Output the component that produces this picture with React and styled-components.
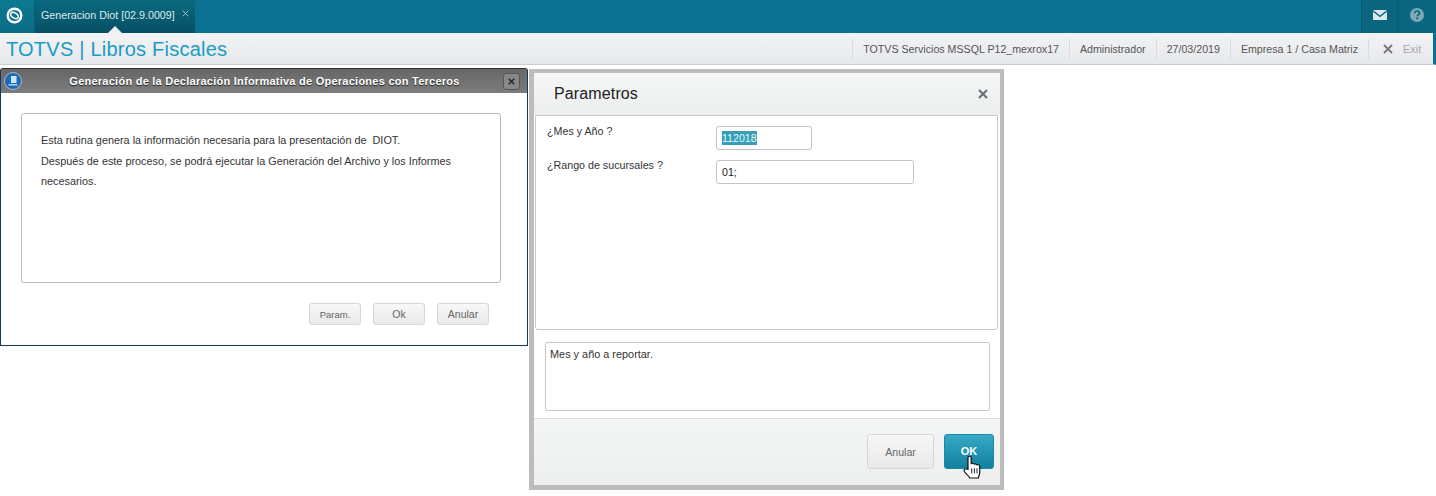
import React from 'react';
import styled, { createGlobalStyle } from 'styled-components';

const GlobalStyle = createGlobalStyle`
  html, body {
    margin: 0;
    padding: 0;
    background: #fff;
    overflow: hidden;
  }
  * { box-sizing: border-box; }
  body { font-family: "Liberation Sans", Arial, sans-serif; }
`;

const Page = styled.div`
  width: 1436px;
  height: 496px;
  display: flex;
  flex-direction: column;
  position: relative;
  overflow: hidden;
`;

const TopBar = styled.div`
  height: 33px;
  display: flex;
  background: #0a7290;
`;

const LogoCell = styled.div`
  width: 35px;
  display: flex;
  align-items: center;
  justify-content: center;
  padding: 0 5px 3px 0;
  background: linear-gradient(#0a7a92, #0b6c84);
  border-right: 1px solid #0a5f78;
`;

const Tab = styled.div`
  width: 160px;
  display: flex;
  align-items: center;
  gap: 7px;
  padding: 0 0 3px 6px;
  position: relative;
  color: #dcebef;
  font-size: 10.7px;
  background: linear-gradient(#0a6a80, #074f64);
  &::after {
    content: '';
    position: absolute;
    left: 73px;
    bottom: 0;
    border: 7px solid transparent;
    border-top: 0;
    border-bottom-color: #eef0f2;
  }
`;

const TabClose = styled.span`
  display: flex;
  margin-top: -3px;
`;

const Spacer = styled.div`
  flex: 1;
`;

const TopIcon = styled.div`
  width: ${(p) => p.$w}px;
  display: flex;
  align-items: center;
  justify-content: center;
  padding-bottom: 3px;
  background: #0a667f;
  border-left: 1px solid #085a72;
`;

const SubBar = styled.div`
  height: 32px;
  display: flex;
  align-items: center;
  background: linear-gradient(#f1f3f5, #e6e8eb);
  border-bottom: 1px solid #c9cbcd;
  border-right: 3px solid #0a7290;
`;

const AppTitle = styled.div`
  flex: 1;
  padding: 2px 0 0 6px;
  font-size: 20px;
  letter-spacing: 0.23px;
  color: #1b9cc3;
`;

const InfoCell = styled.div`
  height: 20px;
  display: flex;
  align-items: center;
  padding: 0 10px;
  font-size: 10.65px;
  color: #555;
  border-left: 1px solid #d9dbdd;
`;

const ExitCell = styled(InfoCell)`
  width: 65px;
  gap: 10px;
  padding: 0 0 0 14px;
  font-size: 10.9px;
  color: #aaa;
`;

const LegacyWindow = styled.section`
  position: absolute;
  left: 0;
  top: 68px;
  width: 528px;
  height: 278px;
  display: flex;
  flex-direction: column;
  background: #fff;
  border: 1px solid #0c3c66;
  border-top-color: #333;
  border-radius: 3px 3px 0 0;
`;

const LegacyTitle = styled.header`
  height: 24px;
  display: flex;
  align-items: center;
  position: relative;
  padding: 0 7px 0 3px;
  background: linear-gradient(#666, #7d7d7d);
`;

const TitleText = styled.h1`
  flex: 1;
  margin: 0;
  padding-left: 4px;
  text-align: center;
  font-size: 11px;
  font-weight: bold;
  letter-spacing: 0.25px;
  color: #fff;
  text-shadow: 0 1px 1px #222;
`;

const LegacyClose = styled.div`
  width: 17px;
  height: 17px;
  display: flex;
  align-items: center;
  justify-content: center;
  background: #888;
  border: 1px solid #555;
  border-radius: 3px;
`;

const LegacyBody = styled.div`
  flex: 1;
  display: flex;
  flex-direction: column;
  padding: 20px 26px 20px 20px;
`;

const MessageBox = styled.div`
  height: 170px;
  padding: 16px 19px;
  font-size: 10.85px;
  line-height: 20.5px;
  color: #333;
  border: 1px solid #bbb;
  border-radius: 3px;
`;

const LegacyButtons = styled.div`
  display: flex;
  justify-content: flex-end;
  gap: 12px;
  margin-top: 20px;
  padding-right: 12px;
`;

const SmallButton = styled.button`
  width: 52px;
  height: 22px;
  padding: 0;
  font-family: inherit;
  font-size: ${(p) => p.$size || 10}px;
  color: #666;
  background: linear-gradient(#f7f7f7, #e9e9e9);
  border: 1px solid #d6d6d6;
  border-radius: 3px;
`;

const ParamWindow = styled.section`
  position: absolute;
  left: 529px;
  top: 69px;
  width: 475px;
  height: 421px;
  display: flex;
  flex-direction: column;
  background: #fff;
  border: solid #bcbcbc;
  border-width: 4px 4px 5px 5px;
`;

const ParamHeader = styled.header`
  height: 42px;
  display: flex;
  align-items: center;
  justify-content: space-between;
  padding: 0 12px 0 20px;
  background: linear-gradient(#f5f6f6, #eceded);
  font-size: 16px;
  letter-spacing: 0.13px;
  color: #222;
`;

const ParamBody = styled.div`
  height: 216px;
  margin-right: 2px;
  margin-left: 1px;
  display: grid;
  grid-template-columns: 169px 1fr;
  grid-auto-rows: 24px;
  row-gap: 10px;
  align-content: start;
  padding: 10px 0 0 11px;
  background: #fff;
  border: 1px solid #c8c8c8;
  border-radius: 0 0 3px 3px;
`;

const FieldLabel = styled.label`
  font-size: 10.7px;
  line-height: 11px;
  color: #333;
`;

const Field = styled.div`
  width: ${(p) => p.$w}px;
  height: 24px;
  display: flex;
  align-items: center;
  padding-left: 5px;
  font-size: 10.6px;
  color: #222;
  background: #fff;
  border: 1px solid #c4c4c4;
  border-radius: 3px;
`;

const Selected = styled.span`
  padding: 1px 0;
  color: #dff;
  background: #3a9db5;
`;

const HelpArea = styled.div`
  flex: 1;
  padding: 12px 10px 7px 11px;
`;

const HelpBox = styled.div`
  height: 69px;
  padding: 5px 4px;
  font-size: 10.9px;
  color: #333;
  border: 1px solid #c8c8c8;
  border-radius: 2px;
`;

const ParamFooter = styled.footer`
  height: 67px;
  display: flex;
  justify-content: flex-end;
  gap: 10px;
  padding: 15px 6px 0 0;
  background: linear-gradient(#f4f5f5, #edeeef);
  border-top: 1px solid #dcdcdc;
`;

const CancelButton = styled.button`
  width: 67px;
  height: 35px;
  padding: 0;
  font-family: inherit;
  font-size: 10.6px;
  color: #666;
  background: linear-gradient(#f7f7f7, #e9e9e9);
  border: 1px solid #d6d6d6;
  border-radius: 3px;
`;

const OkButton = styled.button`
  width: 50px;
  height: 35px;
  padding: 0 0 2px;
  font-family: inherit;
  font-size: 11px;
  font-weight: bold;
  color: #fff;
  background: linear-gradient(#36aac8, #12809f);
  border: 1px solid #1a8aa8;
  border-radius: 3px;
`;

const Cursor = styled.svg`
  position: absolute;
  left: 963px;
  top: 455px;
`;

const CloseGlyph = ({ size, color, width }) => (
  <svg width={size} height={size} viewBox="0 0 10 10">
    <path d="M1 1L9 9M9 1L1 9" stroke={color} strokeWidth={width} fill="none" />
  </svg>
);

const App = () => (
  <Page>
    <GlobalStyle />
    <TopBar>
      <LogoCell>
        <svg width="17" height="17" viewBox="0 0 17 17">
          <circle cx="8.5" cy="8.5" r="6.8" fill="none" stroke="#fff" strokeWidth="2.4" />
          <ellipse cx="8.5" cy="8.5" rx="4.2" ry="2.5" transform="rotate(32 8.5 8.5)" fill="none" stroke="#fff" strokeWidth="1.5" />
        </svg>
      </LogoCell>
      <Tab>
        Generacion Diot [02.9.0009]
        <TabClose>
          <CloseGlyph size={7} color="#a9ccd6" width={1.3} />
        </TabClose>
      </Tab>
      <Spacer />
      <TopIcon $w={36}>
        <svg width="14" height="10" viewBox="0 0 14 10">
          <path d="M0 0H14L7 5.5Z" fill="#dbe9ee" />
          <path d="M0 1.8L7 7.2L14 1.8V10H0Z" fill="#dbe9ee" />
        </svg>
      </TopIcon>
      <TopIcon $w={39}>
        <svg width="14" height="14" viewBox="0 0 14 14">
          <circle cx="7" cy="7" r="7" fill="#7fa9b8" />
          <path d="M4.7 5.2C4.8 3.7 5.8 3 7.1 3C8.5 3 9.5 3.8 9.5 5C9.5 6.5 7.4 6.6 7.3 8.3" fill="none" stroke="#0a667f" strokeWidth="1.7" />
          <rect x="6.3" y="9.4" width="2" height="1.9" fill="#0a667f" />
        </svg>
      </TopIcon>
    </TopBar>
    <SubBar>
      <AppTitle>TOTVS | Libros Fiscales</AppTitle>
      <InfoCell>TOTVS Servicios MSSQL P12_mexrox17</InfoCell>
      <InfoCell>Administrador</InfoCell>
      <InfoCell>27/03/2019</InfoCell>
      <InfoCell>Empresa 1 / Casa Matriz</InfoCell>
      <ExitCell>
        <CloseGlyph size={10} color="#777" width={1.8} />
        Exit
      </ExitCell>
    </SubBar>

    <LegacyWindow>
      <LegacyTitle>
        <svg width="18" height="18" viewBox="0 0 18 18">
          <circle cx="9" cy="9" r="8.5" fill="#1c6bb8" stroke="#a8b8c6" />
          <rect x="7" y="4" width="5.5" height="7" fill="#cfe4f5" />
          <rect x="4.5" y="12" width="9" height="1.6" fill="#a9cdec" />
        </svg>
        <TitleText>Generación de la Declaración Informativa de Operaciones con Terceros</TitleText>
        <LegacyClose>
          <CloseGlyph size={7} color="#223" width={2} />
        </LegacyClose>
      </LegacyTitle>
      <LegacyBody>
        <MessageBox>
          Esta rutina genera la información necesaria para la presentación de&nbsp; DIOT.
          <br />
          Después de este proceso, se podrá ejecutar la Generación del Archivo y los Informes
          <br />
          necesarios.
        </MessageBox>
        <LegacyButtons>
          <SmallButton $size={9.5}>Param.</SmallButton>
          <SmallButton $size={10.5}>Ok</SmallButton>
          <SmallButton $size={10.5}>Anular</SmallButton>
        </LegacyButtons>
      </LegacyBody>
    </LegacyWindow>

    <ParamWindow>
      <ParamHeader>
        Parametros
        <CloseGlyph size={10} color="#666c78" width={2} />
      </ParamHeader>
      <ParamBody>
        <FieldLabel>¿Mes y Año ?</FieldLabel>
        <Field $w={96}>
          <Selected>112018</Selected>
        </Field>
        <FieldLabel>¿Rango de sucursales ?</FieldLabel>
        <Field $w={198}>01;</Field>
      </ParamBody>
      <HelpArea>
        <HelpBox>Mes y año a reportar.</HelpBox>
      </HelpArea>
      <ParamFooter>
        <CancelButton>Anular</CancelButton>
        <OkButton>OK</OkButton>
      </ParamFooter>
    </ParamWindow>

    <Cursor width="18" height="24" viewBox="0 0 14.5 23.5" preserveAspectRatio="none">
      <path
        d="M4 14V2.5C4 .8 6.6 .8 6.6 2.5V9C6.8 7.8 9 7.8 9 9.4C9.3 8.4 11.2 8.6 11.2 10C11.6 9.2 13.5 9.4 13.5 11V17C13.5 19 12.7 20 12.4 22.5H5.5C4.8 20.5 1.4 17.4 .9 15.8C.4 14 2.6 13 4 14Z"
        fill="#fff"
        stroke="#111"
        strokeWidth="1"
      />
      <path d="M7 13V18M9.2 13V18M11.3 13V18" stroke="#111" strokeWidth=".8" />
    </Cursor>
  </Page>
);

export default App;
